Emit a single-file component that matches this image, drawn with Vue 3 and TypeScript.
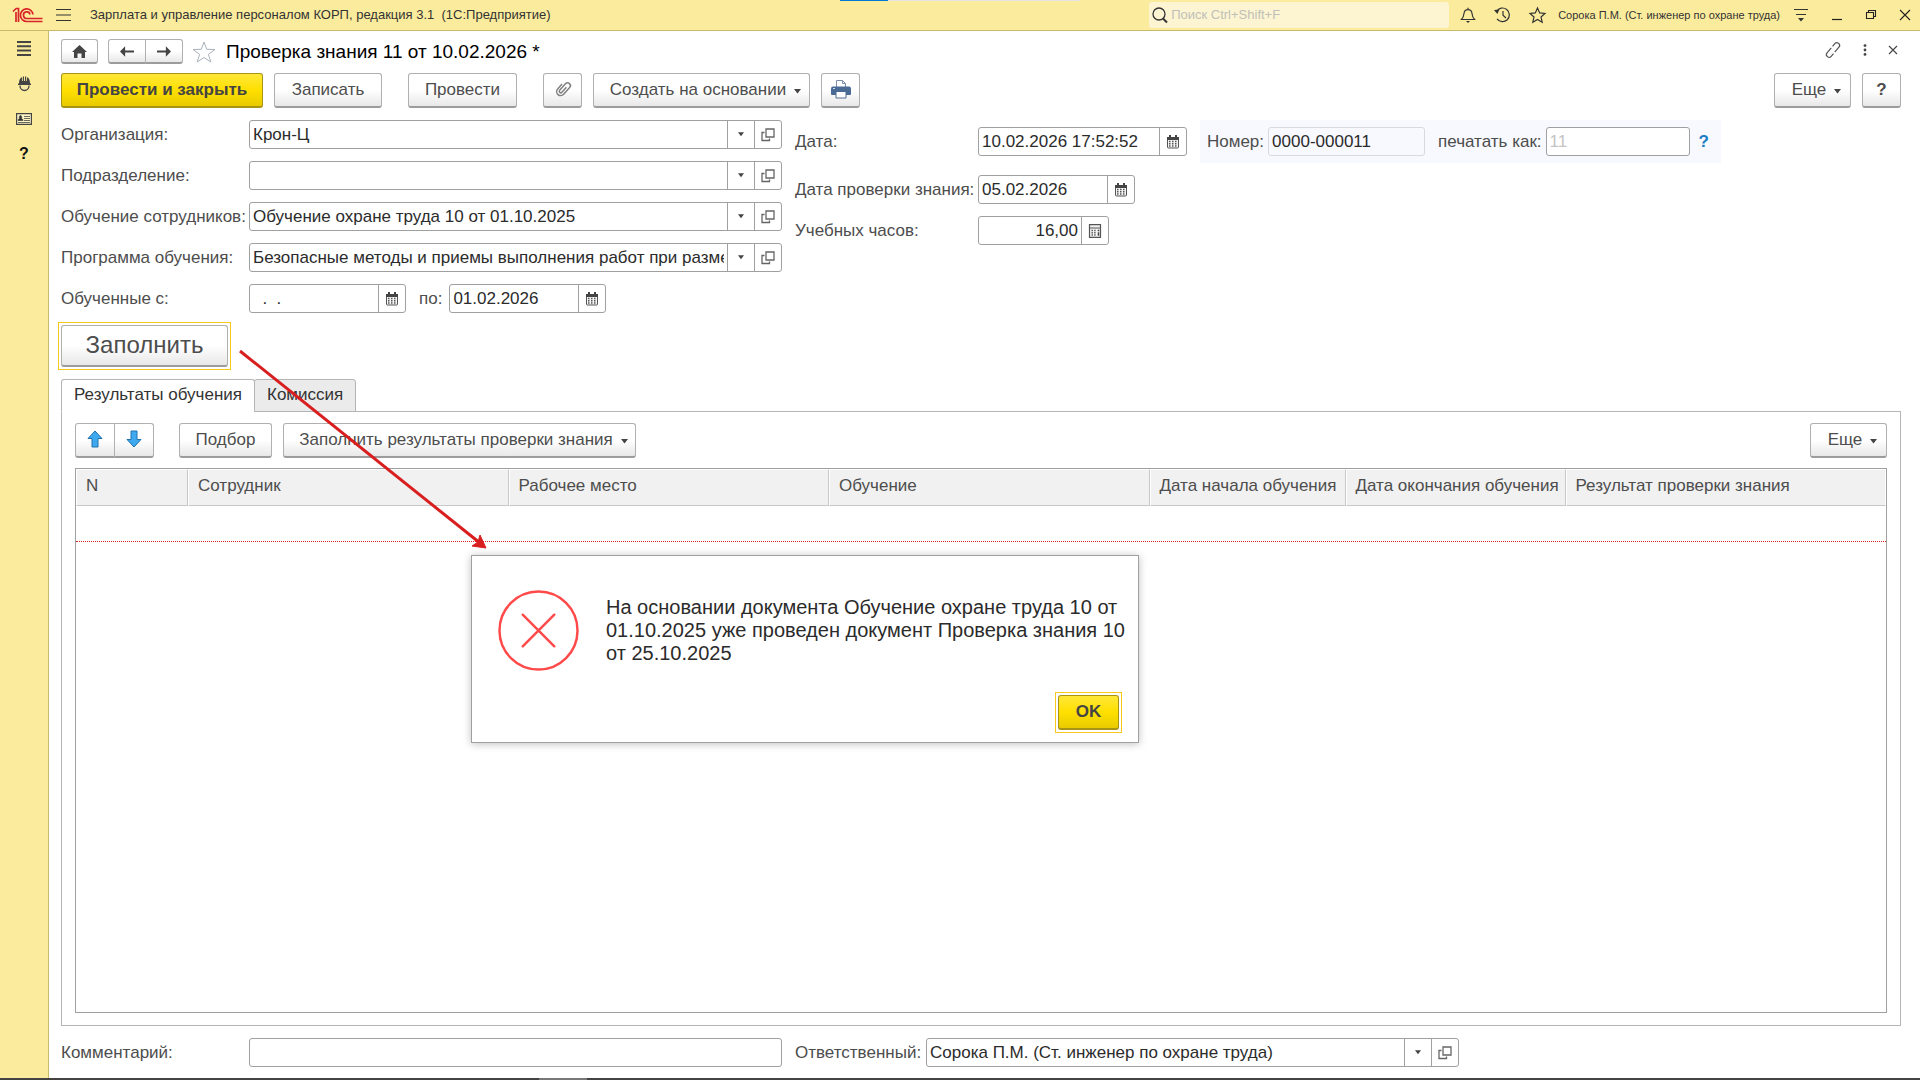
<script setup lang="ts">
import { ref } from 'vue'

interface RefField {
  id: string
  label: string
  value: string
}

interface Column {
  title: string
  width?: number
}

const mainFields = ref<RefField[]>([
  { id: 'org', label: 'Организация:', value: 'Крон-Ц' },
  { id: 'dept', label: 'Подразделение:', value: '' },
  { id: 'training', label: 'Обучение сотрудников:', value: 'Обучение охране труда 10 от 01.10.2025' },
  {
    id: 'program',
    label: 'Программа обучения:',
    value: 'Безопасные методы и приемы выполнения работ при размещении',
  },
])

const columns: Column[] = [
  { title: 'N', width: 112 },
  { title: 'Сотрудник' },
  { title: 'Рабочее место' },
  { title: 'Обучение' },
  { title: 'Дата начала обучения', width: 196 },
  { title: 'Дата окончания обучения', width: 220 },
  { title: 'Результат проверки знания' },
]

const trainedFrom = ref('  .  .')
const trainedTo = ref('01.02.2026')
const docDate = ref('10.02.2026 17:52:52')
const checkDate = ref('05.02.2026')
const hours = ref('16,00')
const docNumber = ref('0000-000011')
const comment = ref('')
const responsible = ref('Сорока П.М. (Ст. инженер по охране труда)')
const activeTab = ref(0)
const tabs = ['Результаты обучения', 'Комиссия']
const dialogOpen = ref(true)
</script>

<template>
  <div class="app">
    <svg class="sprite" aria-hidden="true">
      <symbol id="i-down" viewBox="0 0 7 5"><path d="M0 0h7L3.5 4.5z" fill="#444" /></symbol>
      <symbol id="i-open" viewBox="0 0 14 14">
        <path d="M5 1h8v8H5z M3.5 4.500H1v8h7.500V10.500" fill="none" stroke="#666" stroke-width="1.300" />
      </symbol>
      <symbol id="i-cal" viewBox="0 0 14 14">
        <path d="M1.500 5v7q0 1 1 1h9q1 0 1-1V5" fill="#f4f4f4" stroke="#555" />
        <path d="M1 2h2V0h2v2h4V0h2v2h2v3H1z" fill="#444" />
        <path d="M3 6.500h8M3 8.800h8M3 11h8" stroke="#555" stroke-width="1.500" stroke-dasharray="1.500 1.500" />
      </symbol>
      <symbol id="i-calc" viewBox="0 0 14 14">
        <path d="M1.500 .700h11v12.600h-11z" fill="#f4f4f4" stroke="#555" stroke-width="1.200" />
        <path d="M2 4h10" stroke="#555" />
        <path d="M3.500 6.500h5M3.500 8.800h5M3.500 11h5" stroke="#555" stroke-width="1.400" stroke-dasharray="1.400 1.300" />
        <path d="M10.500 5.800v1.400M10.500 8.200v3.500" stroke="#444" stroke-width="1.500" />
      </symbol>
    </svg>

    <header class="topbar">
      <svg class="logo" viewBox="0 0 30 16" fill="none" stroke="#d8232a" stroke-width="1.700">
        <path d="M0 4.500L3.200 1.500H5.500V15M3 5v10" />
        <path d="M20 7.500A6.300 6.300 0 1 0 14 14.500H29.500" />
        <path d="M17 7.500A3.300 3.300 0 1 0 14 11.500H29.500" />
      </svg>
      <button class="plain burger" aria-label="Меню">
        <svg width="15" height="14" viewBox="0 0 15 14" stroke="#333" stroke-width="1.200"><path d="M0 1.500h15M0 7h15M0 12.500h15" /></svg>
      </button>
      <span class="app-title">Зарплата и управление персоналом КОРП, редакция 3.1 &nbsp;(1С:Предприятие)</span>
      <div class="progress"><i></i></div>
      <label class="search">
        <svg width="16" height="17" viewBox="0 0 16 17" fill="none" stroke="#333"><circle cx="7" cy="7" r="6" stroke-width="1.300" /><path d="M11 11.500l4 4" stroke-width="2" /></svg>
        <input type="search" placeholder="Поиск Ctrl+Shift+F" aria-label="Поиск" />
      </label>
      <div class="top-icons">
        <button class="plain" aria-label="Уведомления">
          <svg width="16" height="16" viewBox="0 0 16 16" fill="none" stroke="#333" stroke-width="1.200"><path d="M1.500 12.500h13C12.500 10.500 12.300 9 12 6.500 11.700 4 10 2.700 8 2.700S4.300 4 4 6.500C3.700 9 3.500 10.500 1.500 12.500zM8 .700v2" /><path d="M6 14h4l-2 2z" fill="#333" stroke="none" /></svg>
        </button>
        <button class="plain" aria-label="История">
          <svg width="17" height="16" viewBox="0 0 17 16" fill="none" stroke="#333" stroke-width="1.200"><path d="M2.600 4.500A6.800 6.800 0 1 1 3 11.800M9 4v4.300l3 2.700" /><path d="M0 3l5.500-.5L3.300 7z" fill="#333" stroke="none" /></svg>
        </button>
        <button class="plain" aria-label="Избранное">
          <svg width="17" height="16" viewBox="0 0 17 16" fill="none" stroke="#333" stroke-width="1.200"><path d="M8.500 1l2.200 4.900 5.300.5-4 3.600 1.200 5.200-4.700-2.800-4.700 2.800L5 10 1 6.400l5.300-.5z" /></svg>
        </button>
      </div>
      <span class="user">Сорока П.М. (Ст. инженер по охране труда)</span>
      <div class="win-icons">
        <button class="plain" aria-label="Настройки">
          <svg width="14" height="14" viewBox="0 0 14 14"><path d="M0 1.500h14M2 6.500h10" stroke="#333" stroke-width="1.200" /><path d="M4 10h6l-3 3.500z" fill="#333" /></svg>
        </button>
        <button class="plain" aria-label="Свернуть">
          <svg width="10" height="12" viewBox="0 0 10 12"><path d="M0 10.500h10" stroke="#222" stroke-width="1.200" /></svg>
        </button>
        <button class="plain" aria-label="Восстановить">
          <svg width="10" height="10" viewBox="0 0 10 10" fill="none" stroke="#222" stroke-width="1.100"><path d="M.5 2.500h7v6h-7zM2.500 2.500v-2h7v6h-2" /></svg>
        </button>
        <button class="plain" aria-label="Закрыть">
          <svg width="10" height="10" viewBox="0 0 10 10" stroke="#222" stroke-width="1.100"><path d="M0 0l10 10M10 0L0 10" /></svg>
        </button>
      </div>
    </header>

    <div class="body">
      <nav class="sidebar">
        <button class="plain" aria-label="Разделы">
          <svg width="14" height="15" viewBox="0 0 14 15" stroke="#444" stroke-width="2"><path d="M0 1h14M0 5.300h14M0 9.600h14M0 14h14" /></svg>
        </button>
        <button class="plain" aria-label="Охрана труда">
          <svg width="13" height="15" viewBox="0 0 13 15"><path d="M1 7C1 3.500 2.500 1.800 4 1.300V5h.800V.500h1.200V5h1V.500h1.200V5H9V1.300C10.500 1.800 12 3.500 12 7l1 1v1H0V8z" fill="#444" /><path d="M2 9.500c0 3 2 5 4.500 5s4.500-2 4.500-5" fill="#f6e9a8" stroke="#444" stroke-width="1.300" /></svg>
        </button>
        <button class="plain" aria-label="Карточки">
          <svg width="16" height="12" viewBox="0 0 16 12"><path d="M.6 .6h14.800v10.800H.6z" fill="#fdf5c4" stroke="#444" stroke-width="1.200" /><path d="M2 7.500c0-1.500 1-1.500 1.500-2C3 4 3.500 2.500 4.500 2.500S6 4 5.500 5.500c.5.500 1.500.5 1.500 2zM8 3.500h6M8 5.500h6M8 7.500h6M2 9.500h12" fill="#333" stroke="#444" stroke-width=".8" /></svg>
        </button>
        <button class="plain help" aria-label="Справка">?</button>
      </nav>

      <main class="content">
        <div class="title-row">
          <button class="btn nav" aria-label="Домой">
            <svg width="15" height="13" viewBox="0 0 15 13"><path d="M7.500 0L15 7h-2v6H9.500V8.500h-4V13H2V7H0z" fill="#444" /></svg>
          </button>
          <div class="group nav-group">
            <button class="btn nav" aria-label="Назад">
              <svg width="14" height="11" viewBox="0 0 15 11"><path d="M15 4.300v2.400H5.500V11L0 5.500 5.500 0v4.300z" fill="#444" /></svg>
            </button>
            <button class="btn nav" aria-label="Вперед">
              <svg width="14" height="11" viewBox="0 0 15 11"><path d="M0 4.300v2.400h9.500V11L15 5.500 9.500 0v4.300z" fill="#444" /></svg>
            </button>
          </div>
          <button class="plain fav" aria-label="В избранное">
            <svg width="24" height="22" viewBox="0 0 24 22" fill="none" stroke="#aab2bb"><path d="M12 1l2.700 7.300 8.300.2-6.600 4.900 2.400 7.600L12 16.500 5.200 21l2.400-7.600L1 8.500l8.300-.2z" /></svg>
          </button>
          <h1>Проверка знания 11 от 10.02.2026 *</h1>
          <div class="title-tools">
            <button class="plain" aria-label="Ссылка">
              <svg width="16" height="16" viewBox="0 0 16 16" fill="none" stroke="#555" stroke-width="1.200">
                <path transform="rotate(-50 8 8)" d="M8.500 5.300H2a2.700 2.700 0 0 0 0 5.400H5.500M7.500 10.700H14a2.700 2.700 0 0 0 0-5.400H10.500" />
              </svg>
            </button>
            <button class="plain" aria-label="Действия">
              <svg width="4" height="12" viewBox="0 0 4 12" fill="#444"><circle cx="2" cy="1.600" r="1.400" /><circle cx="2" cy="6" r="1.400" /><circle cx="2" cy="10.400" r="1.400" /></svg>
            </button>
            <button class="plain" aria-label="Закрыть форму">
              <svg width="8" height="8" viewBox="0 0 8 8" stroke="#444" stroke-width="1.100"><path d="M0 0l8 8M8 0L0 8" /></svg>
            </button>
          </div>
        </div>

        <div class="toolbar">
          <button class="btn primary post">Провести и закрыть</button>
          <button class="btn save">Записать</button>
          <button class="btn conduct">Провести</button>
          <button class="btn clip" aria-label="Файлы">
            <svg width="18" height="18" viewBox="0 0 18 18" fill="none" stroke="#808080" stroke-width="1.500">
              <path transform="rotate(42 9 9)" d="M5 6v6.500a4 4 0 0 0 8 0V3.500a2.800 2.800 0 0 0-5.600 0v8.700a1.500 1.500 0 0 0 3 0V5.500" />
            </svg>
          </button>
          <button class="btn create">Создать на основании<svg class="caret"><use href="#i-down" /></svg></button>
          <button class="btn print" aria-label="Печать">
            <svg width="20" height="20" viewBox="0 0 20 20"><path d="M5.500 8V1.500h6L14.500 4.500V8" fill="#fff" stroke="#7b8fa8" /><path d="M11.500 1.500v3h3" fill="none" stroke="#7b8fa8" /><path d="M2 7.500h16q2 0 2 2V15q0 1-1 1H1q-1 0-1-1V9.500q0-2 2-2z" fill="#4a6b94" /><path d="M2 9.500h2" stroke="#cfdbe8" /><path d="M5 12.500h10V19H5z" fill="#fff" stroke="#4a6b94" /></svg>
          </button>
          <button class="btn more push">Еще<svg class="caret"><use href="#i-down" /></svg></button>
          <button class="btn ask" aria-label="Справка по форме">?</button>
        </div>

        <form class="form" @submit.prevent>
          <div class="form-left">
            <div v-for="f in mainFields" :key="f.id" class="row">
              <label :for="f.id">{{ f.label }}</label>
              <div class="field grow">
                <input :id="f.id" v-model="f.value" type="text" />
                <button type="button" aria-label="Выбрать"><svg class="tri"><use href="#i-down" /></svg></button>
                <button type="button" aria-label="Открыть"><svg class="ico"><use href="#i-open" /></svg></button>
              </div>
            </div>
            <div class="row">
              <label for="from">Обученные с:</label>
              <div class="field date">
                <input id="from" v-model="trainedFrom" class="empty-date" type="text" />
                <button type="button" aria-label="Календарь"><svg class="ico"><use href="#i-cal" /></svg></button>
              </div>
              <label for="to" class="to">по:</label>
              <div class="field date">
                <input id="to" v-model="trainedTo" type="text" />
                <button type="button" aria-label="Календарь"><svg class="ico"><use href="#i-cal" /></svg></button>
              </div>
            </div>
          </div>

          <div class="form-right">
            <div class="row tall">
              <label for="doc-date">Дата:</label>
              <div class="field datetime">
                <input id="doc-date" v-model="docDate" type="text" />
                <button type="button" aria-label="Календарь"><svg class="ico"><use href="#i-cal" /></svg></button>
              </div>
              <div class="number-box">
                <label for="num">Номер:</label>
                <div class="field readonly"><input id="num" v-model="docNumber" type="text" readonly /></div>
                <label for="print-as" class="print-label">печатать как:</label>
                <div class="field print-as"><input id="print-as" type="text" placeholder="11" /></div>
                <a href="#" class="hint">?</a>
              </div>
            </div>
            <div class="row">
              <label for="check-date">Дата проверки знания:</label>
              <div class="field date">
                <input id="check-date" v-model="checkDate" type="text" />
                <button type="button" aria-label="Календарь"><svg class="ico"><use href="#i-cal" /></svg></button>
              </div>
            </div>
            <div class="row">
              <label for="hours">Учебных часов:</label>
              <div class="field hours">
                <input id="hours" v-model="hours" type="text" />
                <button type="button" aria-label="Калькулятор"><svg class="ico"><use href="#i-calc" /></svg></button>
              </div>
            </div>
          </div>
        </form>

        <button class="btn fill focused">Заполнить</button>

        <div class="tabs" role="tablist">
          <button
            v-for="(t, i) in tabs"
            :key="t"
            role="tab"
            class="tab"
            :class="{ active: i === activeTab }"
            :aria-selected="i === activeTab"
            @click="activeTab = i"
          >
            {{ t }}
          </button>
        </div>

        <section class="panel">
          <div class="toolbar panel-bar">
            <div class="group">
              <button class="btn arrow" aria-label="Вверх">
                <svg width="16" height="18" viewBox="0 0 16 18"><path d="M8 1l7 7.500h-4V17H5V8.500H1z" fill="#3fa9f0" stroke="#1f72ad" /></svg>
              </button>
              <button class="btn arrow" aria-label="Вниз">
                <svg width="16" height="18" viewBox="0 0 16 18"><path d="M8 17L1 9.500h4V1h6v8.500h4z" fill="#3fa9f0" stroke="#1f72ad" /></svg>
              </button>
            </div>
            <button class="btn pick">Подбор</button>
            <button class="btn results">Заполнить результаты проверки знания<svg class="caret"><use href="#i-down" /></svg></button>
            <button class="btn more push">Еще<svg class="caret"><use href="#i-down" /></svg></button>
          </div>
          <div class="grid">
            <table>
              <thead>
                <tr>
                  <th v-for="c in columns" :key="c.title" scope="col" :style="c.width ? { width: c.width + 'px' } : {}">{{ c.title }}</th>
                </tr>
              </thead>
              <tbody>
                <tr><td :colspan="columns.length"></td></tr>
              </tbody>
            </table>
          </div>
        </section>

        <footer class="bottom">
          <div class="row comment">
            <label for="comment">Комментарий:</label>
            <div class="field grow"><input id="comment" v-model="comment" type="text" /></div>
          </div>
          <div class="row resp">
            <label for="resp">Ответственный:</label>
            <div class="field grow">
              <input id="resp" v-model="responsible" type="text" />
              <button type="button" aria-label="Выбрать"><svg class="tri"><use href="#i-down" /></svg></button>
              <button type="button" aria-label="Открыть"><svg class="ico"><use href="#i-open" /></svg></button>
            </div>
          </div>
        </footer>
      </main>
    </div>

    <div class="edge"><i></i></div>

    <svg class="pointer" width="250" height="202" viewBox="0 0 250 202" aria-hidden="true">
      <path d="M1 1L241 193" stroke="#d81e1e" stroke-width="3" />
      <path d="M247 198L233 196L239 192L241 185z" fill="#d81e1e" stroke="#d81e1e" />
    </svg>

    <div v-if="dialogOpen" class="dialog" role="alertdialog" aria-labelledby="msg">
      <div class="dialog-body">
        <svg width="81" height="81" viewBox="0 0 82 82" fill="none" stroke="#ff4a4a" stroke-linecap="round">
          <circle cx="41" cy="41" r="39.500" stroke-width="2.500" />
          <path d="M25 25l32 32M57 25L25 57" stroke-width="2.500" />
        </svg>
        <p id="msg">На основании документа Обучение охране труда 10 от 01.10.2025 уже проведен документ Проверка знания 10 от 25.10.2025</p>
      </div>
      <button class="btn primary ok focused" @click="dialogOpen = false">OK</button>
    </div>
  </div>
</template>

<style>
body {
  margin: 0;
  background: #fff;
}
</style>

<style scoped>
.app {
  position: relative;
  display: flex;
  flex-direction: column;
  min-height: 100vh;
  font-family: "Liberation Sans", Arial, sans-serif;
  font-size: 17px;
  line-height: 19px;
  color: #4d4d4d;
}
*,
*::before,
*::after {
  box-sizing: border-box;
}
.sprite {
  position: absolute;
  width: 0;
  height: 0;
}
button,
input {
  font: inherit;
  color: inherit;
}
svg {
  display: block;
  flex: none;
  overflow: visible;
}
.plain {
  display: flex;
  align-items: center;
  justify-content: center;
  padding: 0;
  border: 0;
  background: none;
}

/* Top bar */
.topbar {
  position: relative;
  display: flex;
  align-items: center;
  height: 31px;
  padding: 0 10px 0 13px;
  background: #fbec9d;
  border-bottom: 1px solid #c9ba68;
  font-size: 13px;
  line-height: 16px;
  color: #333;
}
.logo {
  width: 30px;
  height: 16px;
}
.burger {
  margin: 0 19px 0 13px;
}
.app-title {
  flex: 1;
  white-space: nowrap;
}
.progress {
  position: absolute;
  top: 0;
  left: 840px;
  width: 240px;
  height: 1px;
  background: #e3e3e3;
}
.progress i {
  display: block;
  width: 48px;
  height: 1px;
  background: #0078d7;
}
.search {
  display: flex;
  align-items: center;
  gap: 3px;
  width: 300px;
  height: 26px;
  padding: 0 3px;
  background: #fdf5d2;
  border-radius: 3px;
}
.search input {
  flex: 1;
  min-width: 0;
  padding: 0;
  border: 0;
  outline: 0;
  background: none;
}
.search input::placeholder {
  color: #c0bfb8;
  opacity: 1;
}
.top-icons {
  display: flex;
  gap: 18px;
  margin: 0 12px 0 11px;
}
.user {
  font-size: 11px;
  white-space: nowrap;
}
.win-icons {
  display: flex;
  align-items: center;
  gap: 24px;
  margin-left: 14px;
}

/* Body */
.body {
  flex: 1;
  display: flex;
}
.sidebar {
  display: flex;
  flex-direction: column;
  width: 49px;
  background: #fbec9d;
  border-right: 1px solid #c9ba68;
}
.sidebar .plain {
  height: 35px;
}
.help {
  font-size: 16px;
  font-weight: bold;
  color: #111;
}
.content {
  flex: 1;
  min-width: 0;
  display: flex;
  flex-direction: column;
  padding: 8px 19px 11px 12px;
}

/* Buttons */
.btn {
  position: relative;
  display: flex;
  align-items: center;
  justify-content: center;
  height: 35px;
  padding: 0 0 2px;
  border: 1px solid #b0b0b0;
  border-bottom: 2px solid #9c9c9c;
  border-radius: 3px;
  background: linear-gradient(#fff 50%, #e8e8e8);
  white-space: nowrap;
}
.primary {
  border-color: #a89414;
  background: linear-gradient(#ffe73a, #ffe000 50%, #e8cb00);
  font-weight: bold;
  color: #444;
}
.focused::after {
  content: "";
  position: absolute;
  inset: -4px -4px -5px;
  border: 1px solid #f8c91c;
}
.group {
  display: flex;
}
.group .btn:first-child {
  border-radius: 3px 0 0 3px;
}
.group .btn:last-child {
  margin-left: -1px;
  border-radius: 0 3px 3px 0;
}
.caret {
  width: 7px;
  height: 5px;
  margin: 5px 0 0 8px;
}
.push {
  margin-left: auto;
}

/* Title */
.title-row {
  display: flex;
  align-items: center;
  height: 25px;
}
.nav {
  width: 37px;
  height: 25px;
  padding: 0;
}
.nav-group {
  margin-left: 10px;
}
.nav-group .nav {
  width: 38px;
}
.fav {
  margin: 0 10px 0 9px;
}
h1 {
  margin: 0;
  font-size: 19px;
  font-weight: normal;
  line-height: 22px;
  color: #000;
  white-space: nowrap;
}
.title-tools {
  display: flex;
  align-items: center;
  gap: 22px;
  height: 22px;
  margin: 0 4px auto auto;
}

/* Toolbar */
.toolbar {
  display: flex;
  margin-top: 9px;
}
.post {
  width: 202px;
}
.save {
  width: 108px;
  margin-left: 11px;
}
.conduct {
  width: 109px;
  margin-left: 26px;
}
.clip {
  width: 39px;
  margin-left: 26px;
}
.create {
  width: 217px;
  margin-left: 11px;
  padding-left: 8px;
}
.print {
  width: 39px;
  margin-left: 11px;
}
.more {
  width: 77px;
  padding-left: 8px;
}
.ask {
  width: 39px;
  margin-left: 11px;
  font-weight: bold;
}

/* Form */
.form {
  display: flex;
  gap: 13px;
  margin-top: 12px;
}
.form-left {
  flex: 0 1 721px;
  display: flex;
  flex-direction: column;
  gap: 12px;
  min-width: 0;
}
.form-right {
  display: flex;
  flex-direction: column;
  gap: 12px;
}
.row {
  display: flex;
  align-items: center;
  height: 29px;
}
.row.tall {
  height: 43px;
}
label {
  flex: none;
  white-space: nowrap;
}
.form-left .row > label:first-child,
.comment label {
  width: 188px;
}
.form-right .row > label:first-child {
  width: 183px;
}
.form-left .row > .to {
  margin: 0 7px 0 13px;
}
.field {
  display: flex;
  height: 29px;
  padding: 0;
  border: 1px solid #a0a0a0;
  border-radius: 3px;
  background: #fff;
}
.field input {
  flex: 1;
  width: 0;
  min-width: 0;
  margin: 0 3px;
  padding: 0;
  border: 0;
  outline: 0;
  background: none;
  color: #2b2b2b;
}
.field input::placeholder {
  color: #c4c4c4;
  opacity: 1;
}
.field .empty-date {
  white-space: pre;
}
.field button {
  display: flex;
  align-items: center;
  justify-content: center;
  width: 27px;
  padding: 0;
  border: 0;
  border-left: 1px solid #a0a0a0;
  background: none;
}
.ico {
  width: 14px;
  height: 14px;
}
.tri {
  width: 6px;
  height: 5px;
}
.grow {
  flex: 1;
  min-width: 0;
}
.date {
  width: 157px;
}
.datetime {
  width: 209px;
}
.hours {
  width: 131px;
}
.hours input {
  text-align: right;
}
.number-box {
  display: flex;
  align-items: center;
  height: 43px;
  margin-left: 13px;
  padding: 0 12px 0 7px;
  background: #f8f9fe;
}
.readonly {
  width: 157px;
  margin-left: 4px;
  border-color: #d9dadd;
  background: none;
}
.print-label {
  margin-left: 13px;
}
.print-as {
  width: 144px;
  margin: 0 9px 0 4px;
}
.hint {
  font-weight: bold;
  color: #1a7cc4;
  text-decoration: none;
}
.fill {
  width: 167px;
  height: 42px;
  margin-top: 12px;
  font-size: 24px;
  line-height: 28px;
}

/* Tabs */
.tabs {
  position: relative;
  z-index: 1;
  display: flex;
  height: 33px;
  margin-top: 12px;
}
.tab {
  height: 33px;
  padding: 0 12px 2px;
  border: 1px solid #b5b5b5;
  border-radius: 3px 3px 0 0;
  background: #ebebeb;
  color: #333;
}
.tab + .tab {
  margin-left: -1px;
}
.tab.active {
  border-bottom-color: #fff;
  background: #fff;
}
.panel {
  flex: 1;
  display: flex;
  flex-direction: column;
  margin-top: -1px;
  padding: 11px 13px 12px;
  border: 1px solid #b5b5b5;
}
.panel-bar {
  margin-top: 0;
}
.arrow {
  width: 40px;
}
.pick {
  width: 93px;
  margin-left: 25px;
}
.results {
  width: 353px;
  margin-left: 11px;
  padding-left: 8px;
}
.grid {
  flex: 1;
  margin-top: 10px;
  border: 1px solid #a0a0a0;
}
table {
  width: 100%;
  table-layout: fixed;
  border-collapse: separate;
  border-spacing: 0;
}
th {
  height: 37px;
  padding: 0 0 4px 9px;
  border: 1px solid #fff;
  border-right-color: #c8c8c8;
  border-bottom-color: #c8c8c8;
  background: #f1f1f1;
  font-weight: normal;
  text-align: left;
  white-space: nowrap;
}
th:last-child {
  border-right-color: #fff;
}
td {
  height: 36px;
  padding: 0;
  border-bottom: 1px dotted #e02020;
}

/* Bottom */
.bottom {
  display: flex;
  gap: 13px;
  margin-top: 12px;
}
.comment {
  flex: 0 1 721px;
}
.resp {
  flex: 0 1 664px;
}
.resp label {
  width: 131px;
}
.edge {
  height: 2px;
  background: #454341;
}
.edge i {
  display: block;
  width: 48px;
  height: 2px;
  margin-left: 539px;
  background: #777;
}

/* Overlays */
.pointer {
  position: absolute;
  z-index: 2;
  top: 350px;
  left: 239px;
  pointer-events: none;
}
.dialog {
  position: absolute;
  z-index: 2;
  top: 555px;
  left: 471px;
  display: flex;
  flex-direction: column;
  width: 668px;
  height: 188px;
  padding: 34px 10px 12px 26px;
  border: 1px solid #a0a0a0;
  background: #fff;
  box-shadow: 0 1px 8px rgba(0, 0, 0, 0.25);
}
.dialog-body {
  display: flex;
  gap: 27px;
}
.dialog p {
  margin: 6px 0 0;
  font-size: 20px;
  line-height: 23px;
  color: #2b2b2b;
}
.ok {
  width: 61px;
  margin: auto 9px 0 auto;
}
</style>
